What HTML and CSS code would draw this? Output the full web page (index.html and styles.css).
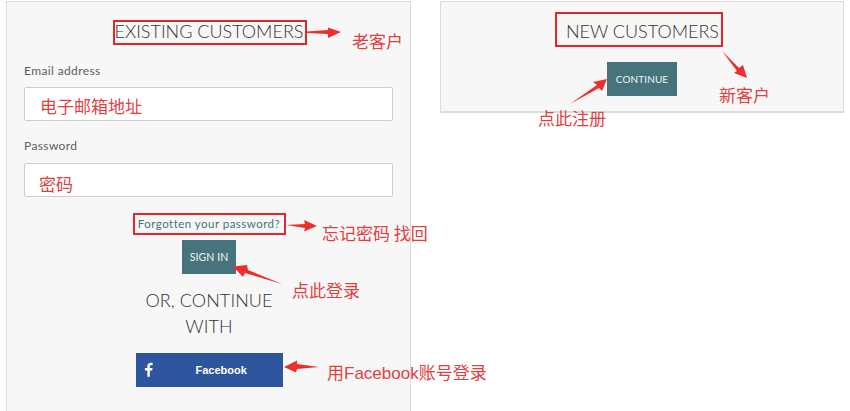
FILE: index.html
```html
<!DOCTYPE html>
<html lang="en">
<head>
<meta charset="utf-8">
<title>Customer login</title>
<link rel="stylesheet" href="styles.css">
</head>
<body>
<main class="page">
  <section class="panel panel-login">
    <h2 class="title">EXISTING CUSTOMERS</h2>
    <label class="label label-email">Email address</label>
    <div class="field"></div>
    <label class="label label-pass">Password</label>
    <div class="field"></div>
    <a class="forgot">Forgotten your password?</a>
    <button class="btn btn-sign">SIGN IN</button>
    <p class="or">OR, CONTINUE<br>WITH</p>
    <button class="fb">
      <svg class="fb-icon" viewBox="0 0 10 16"><path d="M6.5 16V9h2.600l.4-2.800h-3V4.500c0-.8.3-1.300 1.400-1.300h1.700V.7C9.300.6 8.500.5 7.500.5 5.300.5 3.700 1.900 3.700 4.200v2H1V9h2.700v7z" fill="#fff"/></svg>
      <span class="fb-text">Facebook</span>
    </button>
  </section>
  <section class="panel panel-new">
    <h2 class="title title-new">NEW CUSTOMERS</h2>
    <button class="btn btn-continue">CONTINUE</button>
  </section>
</main>

<div class="mark mark-existing"></div>
<div class="mark mark-forgot"></div>
<div class="mark mark-new"></div>

<svg class="arrows" viewBox="0 0 850 411" width="850" height="411">
  <path d="M307 31.500 L328 30 L328 27.500 L341 32 L328 38 L328 34 L307 33 Z"/>
  <path d="M286 225 L305 224 L304 220 L317 226 L304 231.500 L305 228 Z"/>
  <path d="M282 284 L248 270 L247 265 L233 266.500 L243 277 L245 273 Z"/>
  <path d="M319 367 L297 364 L297 360.500 L284 367 L296 372.500 L297 369 Z"/>
  <path d="M570 104 L597 85 L593 82 L607 79 L602 91 L599 88 Z"/>
  <path d="M722 51 L739 68 L743 65 L747 78 L734 73 L737 71 Z"/>
</svg>

<span class="note note-1">老客户</span>
<span class="note note-2">新客户</span>
<span class="note note-3">点此注册</span>
<span class="note note-4">电子邮箱地址</span>
<span class="note note-5">密码</span>
<span class="note note-6">忘记密码 找回</span>
<span class="note note-7">点此登录</span>
<span class="note note-8">用Facebook账号登录</span>
</body>
</html>
```
FILE: styles.css
```css
* { box-sizing: border-box; }
html, body { margin: 0; padding: 0; background: #fff; overflow: hidden; }
body { width: 850px; height: 411px; position: relative; font-family: "Lato", "Liberation Sans", sans-serif; color: #444; }

.page { display: flex; align-items: flex-start; gap: 29px; padding: 1px 0 0 6px; }

.panel { width: 405px; background: #f7f7f7; border: 1px solid #dcdcdc; display: flex; flex-direction: column; align-items: center; }
.panel-login { height: 420px; padding: 17px 16px 0 17px; }
.panel-new { width: 404px; height: 112px; border-width: 1px 1px 2px 1px; padding: 17px 17px 0; }

.title { margin: 0; font-size: 18px; line-height: 24px; font-weight: 300; color: #333; white-space: nowrap; }
.title-new { margin-left: 1px; }

.label { align-self: stretch; margin-right: 1px; font-size: 12px; line-height: 16px; color: #5c5c5c; letter-spacing: .38px; }
.label-email { margin-top: 20px; }
.label-pass { margin-top: 17px; }

.field { align-self: stretch; height: 34px; margin: 8px 1px 0 0; background: #fff; border: 1px solid #ccc; border-radius: 2px; }
.label-pass + .field { margin-top: 9px; }

.forgot { margin-top: 19px; font-size: 11.500px; line-height: 16px; color: #44727b; letter-spacing: .47px; }

.btn { display: block; background: #47747c; color: #eef4f4; border: 0; padding: 0; font-family: inherit; font-size: 10.500px; letter-spacing: .1px; }
.btn-sign { width: 54px; height: 34px; margin-top: 8px; }
.btn-continue { width: 70px; height: 34px; margin-top: 19px; font-size: 10px; }

.or { margin: 14px 0 0; font-size: 18px; line-height: 25.500px; font-weight: 300; letter-spacing: .1px; text-align: center; color: #333; width: 160px; }

.fb { width: 147px; height: 34px; margin-top: 14px; background: #2d569e; color: #fff; border: 0; padding: 0 0 0 8px; display: flex; align-items: center; font-family: "Liberation Sans", sans-serif; font-size: 11px; font-weight: 700; }
.fb-icon { width: 9px; height: 15px; flex: none; margin-top: -2px; }
.fb-text { margin-left: 43px; }

.mark { position: absolute; border: 2px solid #e0282c; }
.mark-existing { left: 113px; top: 20px; width: 194px; height: 25px; }
.mark-forgot { left: 133px; top: 213px; width: 153px; height: 22px; }
.mark-new { left: 555px; top: 12px; width: 168px; height: 35px; }

.arrows { position: absolute; left: 0; top: 0; pointer-events: none; }
.arrows path { fill: #ee2d2d; }

.note { position: absolute; font-family: "Noto Sans CJK SC", sans-serif; font-size: 17px; line-height: 20px; color: #e2403f; white-space: nowrap; }
.note-1 { left: 352px; top: 31px; }
.note-2 { left: 719px; top: 85px; }
.note-3 { left: 538px; top: 108px; }
.note-4 { left: 40px; top: 96px; }
.note-5 { left: 39px; top: 174px; }
.note-6 { left: 322px; top: 223px; }
.note-7 { left: 292px; top: 280px; }
.note-8 { left: 327px; top: 364px; font-family: "Liberation Sans", "Noto Sans CJK SC", sans-serif; }
```
